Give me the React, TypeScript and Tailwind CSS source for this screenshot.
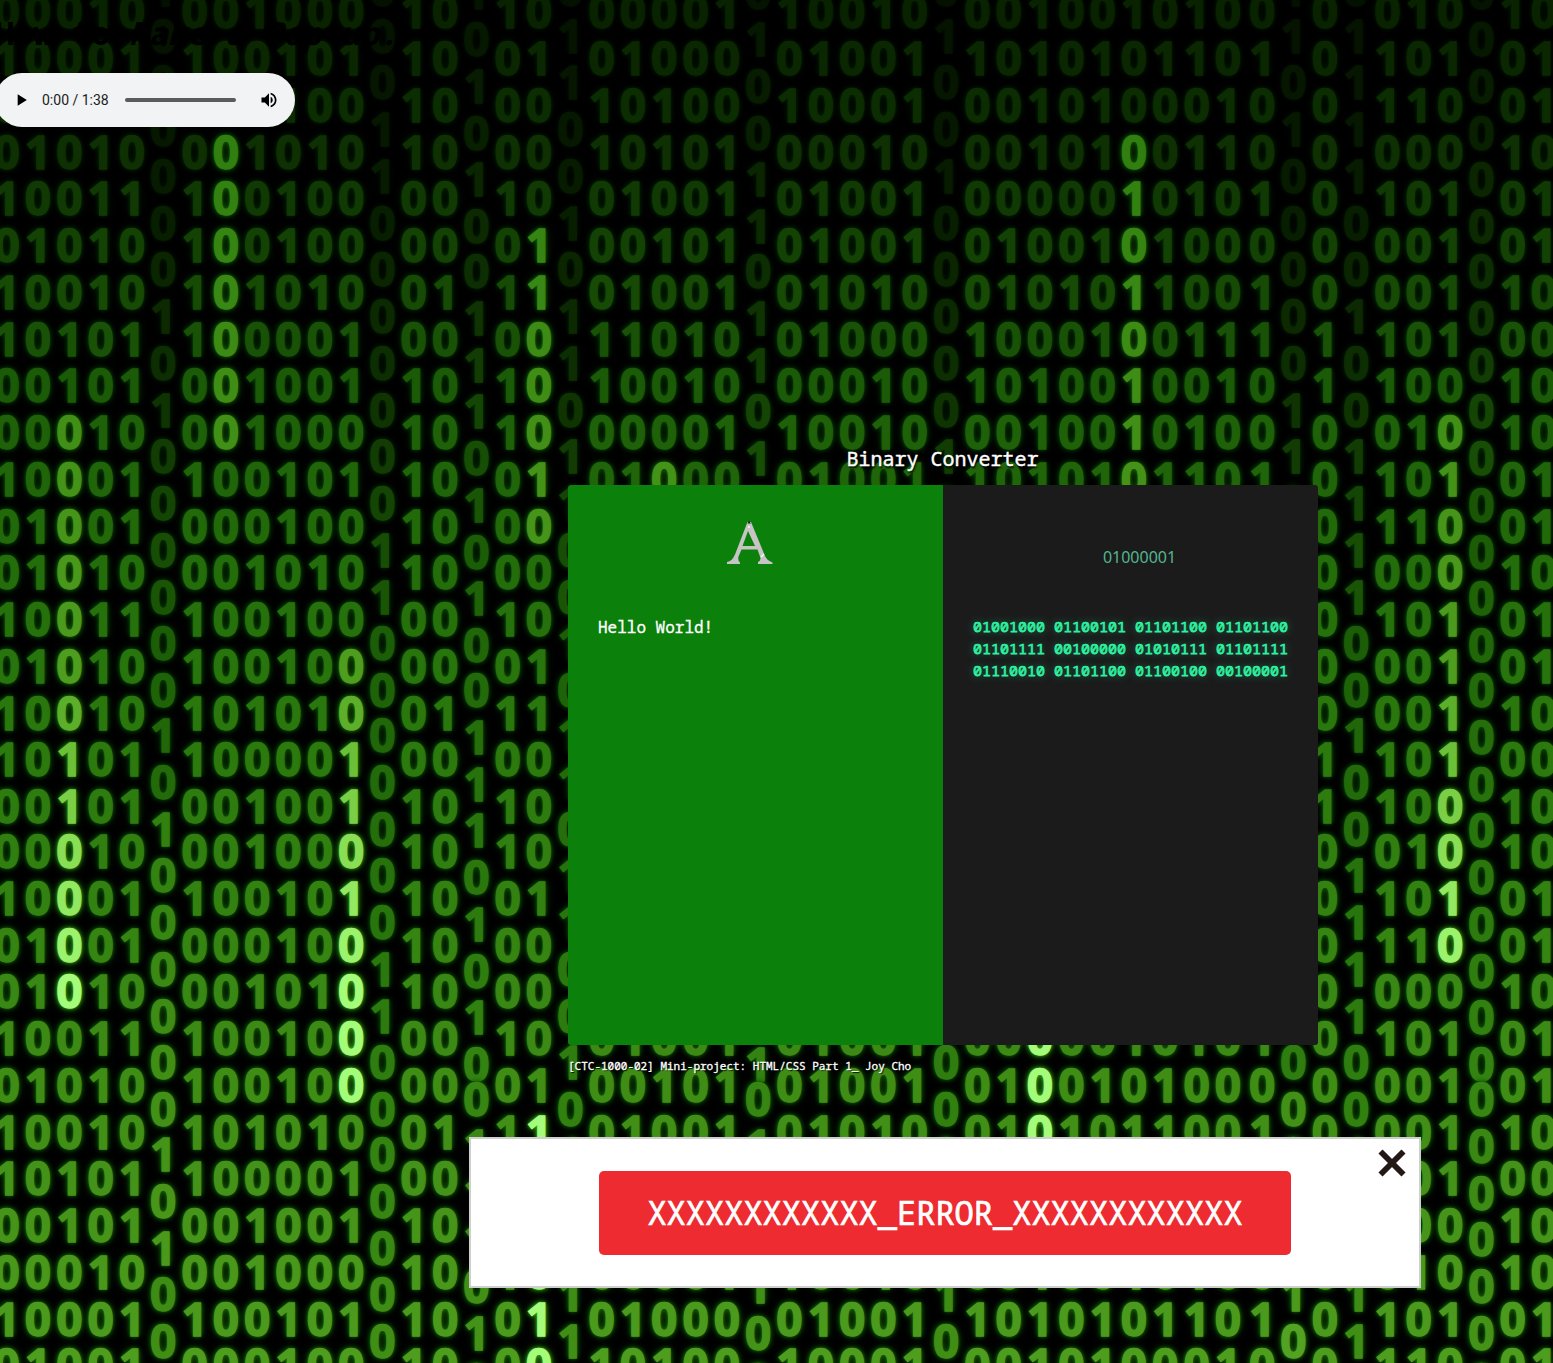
import { X } from "lucide-react";

const MONO = "font-['Noto_Sans_Mono','Liberation_Mono',monospace]";

// Nine rows of digits repeat down the wall; a dot marks a column that is staggered.
const ROWS = [
  "00010.001000.10.10.00001.10010.0010010100.0.010.10",
  "10001.100101.10.01.01000.01001.1010101101.0.101.01",
  "01001.000100.10.00.10100.10001.0010100010.0.110.01",
  "01010.001010.10.00.10101.00010.0010100110.0.000.10",
  "10011.100100.00.10.01001.01001.0000010101.0.101.01",
  "01010.100100.00.01.00101.01001.0100101000.0.001.01",
  "10010.101010.01.11.01001.01010.0101011001.0.001.10",
  "10101.100001.00.00.11010.01000.1000100111.1.101.00",
  "00101.001001.10.10.10010.00010.1010010010.1.100.10",
];

type Stagger = { digits: string; late?: boolean; litFrom?: number; litTo?: number };

const STAGGERED: Record<number, Stagger> = {
  5: { digits: "000000101", litFrom: 18, litTo: 27 },
  12: { digits: "001100000" },
  15: { digits: "010100111", late: true },
  18: { digits: "110010110" },
  24: { digits: "100110110", late: true },
  30: { digits: "100100000" },
  41: { digits: "101000001", litFrom: 24, litTo: 40 },
  43: { digits: "111100100" },
  47: { digits: "000000000", late: true },
};

// column, first lit row, last lit row
const STREAKS = [
  [2, 9, 21],
  [7, 3, 9],
  [11, 14, 23],
  [17, 5, 11],
  [17, 24, 29],
  [21, 10, 14],
  [33, 14, 24],
  [36, 3, 12],
  [46, 9, 20],
];

type Rgb = [number, number, number];
const STOPS: [number, Rgb][] = [
  [0, [9, 34, 0]],
  [150, [14, 48, 2]],
  [290, [22, 74, 5]],
  [430, [30, 97, 8]],
  [620, [38, 113, 12]],
  [850, [48, 127, 16]],
  [1090, [64, 141, 22]],
  [1363, [78, 156, 30]],
  [1460, [108, 192, 56]],
  [1551, [138, 222, 85]],
  [1692, [165, 252, 122]],
];

function ramp(y: number): Rgb {
  for (let i = 1; i < STOPS.length; i++) {
    const [y1, b] = STOPS[i];
    const [y0, a] = STOPS[i - 1];
    if (y <= y1) {
      const t = Math.max(0, (y - y0) / (y1 - y0));
      return a.map((v, k) => v + (b[k] - v) * t) as Rgb;
    }
  }
  return STOPS[STOPS.length - 1][1];
}

function rgb(c: Rgb) {
  return `rgb(${c.map((v) => Math.round(v)).join(" ")})`;
}

function Column({ col }: { col: number }) {
  const stag = STAGGERED[col];
  const start = !stag ? 10.7 : stag.late ? -8.3 : -11.8;
  let y = start;
  const cells = Array.from({ length: 31 }, (_, row) => {
    let digit: string;
    let height = 46.75;
    let color: Rgb;
    const top = y;
    if (stag) {
      digit = stag.digits[(row + 8) % 9];
      if (row === 15 || row === 24) height = 45;
      if (stag.late) {
        height = row === 5 || row === 14 ? 45 : 46.75;
        if (row === 23) height = 35;
      }
      const lit = stag.litFrom !== undefined && row >= stag.litFrom && row <= stag.litTo!;
      color = ramp(lit ? top + 40 : stag.late ? top - 150 : top - 240);
      if (top < 260 && !stag.late) color = ramp(0).map((v) => v * (0.5 + top / 600)) as Rgb;
      if (top < 170 && stag.late) color = ramp(0).map((v) => v * (0.62 + top / 450)) as Rgb;
    } else {
      digit = ROWS[row % 9][col];
      if (row === 17) height = 45;
      const lit = STREAKS.some(([c, a, b]) => c === col && row >= a && row <= b);
      color = ramp(lit ? top + 700 : top);
    }
    y += height;
    const near = rgb([color[0] * 0.4, color[1] * 0.7, color[2] * 0.3]);
    const far = rgb([color[0] * 0.3, color[1] * 0.66, color[2] * 0.15]);
    return (
      <div
        key={row}
        className="shrink-0 text-center leading-[46.75px]"
        style={{ height, color: rgb(color), textShadow: `0 0 3px ${near}, 0 0 5px ${far}, 0 0 9px ${far}` }}
      >
        {digit}
      </div>
    );
  });
  return (
    <div
      className={`flex w-[31.32px] shrink-0 flex-col ${col === 40 ? "ml-[3px]" : ""}`}
      style={{ marginTop: start - 23.4 }}
    >
      {cells}
    </div>
  );
}

function DigitWall() {
  return (
    <div
      aria-hidden
      className="absolute inset-0 flex items-start overflow-hidden bg-black font-['Open_Sans',sans-serif] text-[46px] font-bold select-none [-webkit-text-stroke:1.3px_currentColor]"
    >
      <div className="-ml-[9px] flex shrink-0 items-start">
        {Array.from({ length: 50 }, (_, col) => (
          <Column key={col} col={col} />
        ))}
      </div>
    </div>
  );
}

function AudioPlayer() {
  return (
    <div className="-ml-[5px] flex h-[54px] w-[300px] items-center rounded-full bg-[#f1f3f4] font-[Roboto,sans-serif] text-sm text-[#202020]">
      <svg className="ml-[14px] size-5 translate-x-[2px]" viewBox="0 0 24 24" fill="black">
        <path d="M8 5v14l11-7z" />
      </svg>
      <span className="ml-[13px] w-[68px] whitespace-nowrap">0:00 / 1:38</span>
      <div className="ml-[15px] h-1 w-[111px] rounded-full bg-[#5b5a5c]" />
      <svg className="ml-[23px] size-5" viewBox="0 0 24 24" fill="black">
        <path d="M3 9v6h4l5 5V4L7 9H3zm13.5 3A4.5 4.5 0 0 0 14 7.97v8.05c1.48-.73 2.5-2.25 2.5-4.02zM14 3.23v2.06c2.89.86 5 3.54 5 6.71s-2.11 5.85-5 6.71v2.06c4.01-.91 7-4.49 7-8.77s-2.99-7.86-7-8.77z" />
      </svg>
    </div>
  );
}

function LetterMark() {
  return (
    <svg className="h-[43px] w-[46px]" viewBox="0 0 46 43">
      <path
        fill="#c6c4c4"
        fillRule="evenodd"
        d="M20.500 1h3.500L38 35q2 4.500 7.500 6.500V43H31V41q3.500-1.500 2-5.500L30.500 28.500H14.500L11.500 35.500q-1 4 1.500 6V43H0V41q5-.5 8-7.500zM21 10L15.500 25H28z"
      />
      <path fill="#111" d="M20.500 2.500L22 0l1.800 2.500z" />
      <path stroke="#fff" strokeWidth="1.300" d="M22 5v2M34 36l3-3" />
    </svg>
  );
}

function Converter() {
  return (
    <main className="ml-[568px] w-[750px]">
      <h1 className="h-[40px] pr-px text-center text-xl leading-7 text-white [-webkit-text-stroke:0.4px_white] [text-shadow:1px_2px_2px_black]">
        Binary Converter
      </h1>
      <div className="grid h-[560px] grid-cols-2 overflow-hidden rounded-[3px]">
        <section className="bg-[#0b800b] px-[30px] pt-9">
          <div className="flex h-[95px] justify-center pr-[11px]">
            <LetterMark />
          </div>
          <p className="text-base leading-[22px] text-white [-webkit-text-stroke:0.3px_white]">Hello World!</p>
        </section>
        <section className="bg-[#1b1b1b] px-[30px] pt-[60px]">
          <p className="h-[70px] pl-[18px] text-center font-['Noto_Sans',sans-serif] text-base text-[#54b58f]">01000001</p>
          <p className="text-[15px] leading-[22px] text-[#2ef0a0] [-webkit-text-stroke:0.75px_#2ef0a0] [text-shadow:0_0_8px_#2a8a68]">
            01001000 01100101 01101100 01101100 01101111 00100000 01010111 01101111 01110010 01101100 01100100 00100001
          </p>
        </section>
      </div>
      <footer className="pt-3 text-[11px] leading-[18px] text-white [-webkit-text-stroke:0.3px_white] [text-shadow:1px_1px_1px_black]">
        [CTC-1000-02] Mini-project: HTML/CSS Part 1_ Joy Cho
      </footer>
    </main>
  );
}

function ErrorPopup() {
  return (
    <div className="relative mt-[62px] ml-[469px] flex h-[151px] w-[952px] items-center justify-center border-2 border-[#cfcfcf] bg-white">
      <button className="h-[84px] w-[692px] rounded-[5px] bg-[#ed2b30] text-[32px] text-white [-webkit-text-stroke:0.7px_white]">
        XXXXXXXXXXXX_ERROR_XXXXXXXXXXXX
      </button>
      <X className="absolute top-[1px] right-[4px] size-[46px] text-[#231815]" strokeWidth={3} strokeLinecap="butt" />
    </div>
  );
}

export default function App() {
  return (
    <div className={`relative h-[1363px] w-[1553px] overflow-hidden bg-black ${MONO}`}>
      <DigitWall />
      <div className="relative">
        <h2 className="-ml-[5px] h-[73px] pt-[11px] text-[32px] leading-[44px] font-bold whitespace-nowrap text-black">
          How to <i>Make a Pop-up.</i>
        </h2>
        <AudioPlayer />
        <div className="h-[318px]" />
        <Converter />
        <ErrorPopup />
      </div>
    </div>
  );
}
